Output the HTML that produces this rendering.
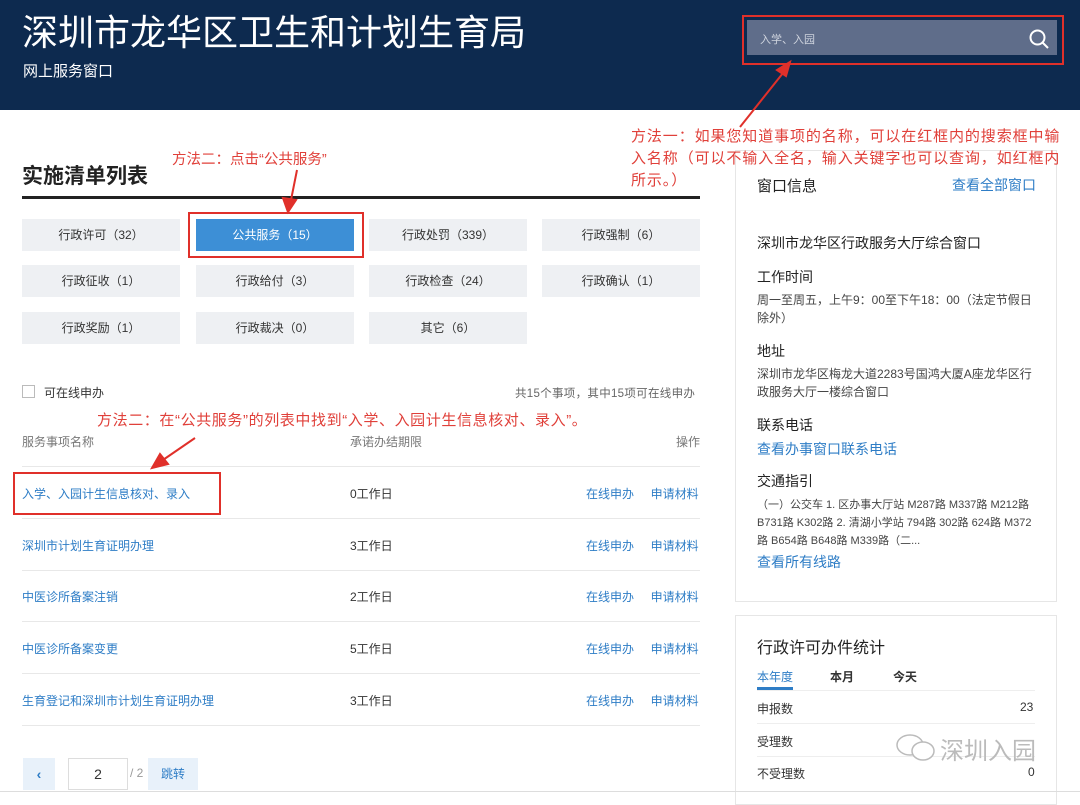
<!DOCTYPE html>
<html><head><meta charset="utf-8"><style>
*{margin:0;padding:0;box-sizing:border-box}
body{width:1080px;height:796px;position:relative;overflow:hidden;background:#fff;font-family:"Liberation Sans","Noto Sans CJK SC",sans-serif;color:#333}
.a{position:absolute;white-space:nowrap}
.hd{position:absolute;left:0;top:0;width:1080px;height:110px;background:#0d2a4f}
.btn{position:absolute;width:158px;height:32px;background:#eef0f3;font-size:12px;text-align:center;line-height:32px;color:#333}
.red{color:#e0403a}
.lnk{color:#2e7dc6}
.row{position:absolute;left:22px;width:678px;border-top:1px solid #e8e8e8}
.rb{position:absolute;border:2px solid #e0302a}
.card{position:absolute;border:1px solid #e6e6e6;background:#fff}
</style></head><body>
<div class="hd"></div>
<div class="a" style="left:22px;top:4px;font-size:36px;color:#fff">深圳市龙华区卫生和计划生育局</div>
<div class="a" style="left:23px;top:60px;font-size:15px;color:#fff">网上服务窗口</div>
<div class="a" style="left:747px;top:20px;width:310px;height:35px;background:#5f6d8a"></div>
<div class="a" style="left:760px;top:31px;font-size:11px;color:#cfd4de">入学、入园</div>
<svg class="a" style="left:1028px;top:28px" width="22" height="22" viewBox="0 0 22 22"><circle cx="9.5" cy="9.5" r="7" fill="none" stroke="#fff" stroke-width="2"/><line x1="14.5" y1="14.5" x2="20" y2="20" stroke="#fff" stroke-width="2"/></svg>
<div class="rb" style="left:742px;top:15px;width:322px;height:50px"></div>
<div class="card" style="left:735px;top:150px;width:322px;height:452px"></div>
<div class="card" style="left:735px;top:615px;width:322px;height:190px"></div>
<svg class="a" style="left:0;top:0;z-index:2" width="1080" height="796"><g stroke="#e0302a" stroke-width="2" fill="#e0302a"><line x1="787" y1="68" x2="740" y2="127"/><polygon points="790,62 777,70 786,76"/><line x1="297" y1="170" x2="290" y2="205"/><polygon points="288,212 283,198 296,200"/><line x1="195" y1="438" x2="160" y2="462"/><polygon points="152,468 160,454 168,464"/></g></svg>
<div class="a red" style="left:631px;top:126px;font-size:15px;line-height:22px;letter-spacing:0.9px;z-index:3">方法一：如果您知道事项的名称，可以在红框内的搜索框中输<br>入名称（可以不输入全名，输入关键字也可以查询，如红框内<br>所示。）</div>
<div class="a red" style="left:172px;top:148px;font-size:14.5px">方法二：点击“公共服务”</div>
<div class="a" style="left:22px;top:160px;font-size:21px;font-weight:bold;color:#222">实施清单列表</div>
<div class="a" style="left:22px;top:196px;width:678px;height:3px;background:#222"></div>
<div class="btn" style="left:22px;top:219px">行政许可（32）</div>
<div class="btn" style="left:196px;top:219px;background:#3d8fd6;color:#fff">公共服务（15）</div>
<div class="btn" style="left:369px;top:219px">行政处罚（339）</div>
<div class="btn" style="left:542px;top:219px">行政强制（6）</div>
<div class="btn" style="left:22px;top:265px">行政征收（1）</div>
<div class="btn" style="left:196px;top:265px">行政给付（3）</div>
<div class="btn" style="left:369px;top:265px">行政检查（24）</div>
<div class="btn" style="left:542px;top:265px">行政确认（1）</div>
<div class="btn" style="left:22px;top:312px">行政奖励（1）</div>
<div class="btn" style="left:196px;top:312px">行政裁决（0）</div>
<div class="btn" style="left:369px;top:312px">其它（6）</div>
<div class="rb" style="left:188px;top:212px;width:176px;height:46px"></div>
<div class="a" style="left:22px;top:385px;width:13px;height:13px;border:1px solid #bbb"></div>
<div class="a" style="left:44px;top:384px;font-size:12px;color:#333">可在线申办</div>
<div class="a" style="left:515px;top:385px;font-size:11.5px;color:#666;letter-spacing:0.3px">共15个事项，其中15项可在线申办</div>
<div class="a red" style="left:97px;top:409px;font-size:15px;letter-spacing:0.6px">方法二：在“公共服务”的列表中找到“入学、入园计生信息核对、录入”。</div>
<div class="a" style="left:22px;top:433px;font-size:12px;color:#777">服务事项名称</div>
<div class="a" style="left:350px;top:433px;font-size:12px;color:#777">承诺办结期限</div>
<div class="a" style="left:676px;top:433px;font-size:12px;color:#777">操作</div>
<div class="row" style="top:466px"></div>
<div class="row" style="top:518px"></div>
<div class="row" style="top:570px"></div>
<div class="row" style="top:621px"></div>
<div class="row" style="top:673px"></div>
<div class="row" style="top:725px"></div>
<div class="a lnk" style="left:22px;top:485px;font-size:12px">入学、入园计生信息核对、录入</div>
<div class="a lnk" style="left:22px;top:537px;font-size:12px">深圳市计划生育证明办理</div>
<div class="a lnk" style="left:22px;top:588px;font-size:12px">中医诊所备案注销</div>
<div class="a lnk" style="left:22px;top:640px;font-size:12px">中医诊所备案变更</div>
<div class="a lnk" style="left:22px;top:692px;font-size:12px">生育登记和深圳市计划生育证明办理</div>
<div class="a" style="left:350px;top:485px;font-size:12px">0工作日</div>
<div class="a" style="left:350px;top:537px;font-size:12px">3工作日</div>
<div class="a" style="left:350px;top:588px;font-size:12px">2工作日</div>
<div class="a" style="left:350px;top:640px;font-size:12px">5工作日</div>
<div class="a" style="left:350px;top:692px;font-size:12px">3工作日</div>
<div class="a lnk" style="left:586px;top:485px;font-size:12px">在线申办&nbsp;&nbsp;&nbsp;&nbsp;&nbsp;申请材料</div>
<div class="a lnk" style="left:586px;top:537px;font-size:12px">在线申办&nbsp;&nbsp;&nbsp;&nbsp;&nbsp;申请材料</div>
<div class="a lnk" style="left:586px;top:588px;font-size:12px">在线申办&nbsp;&nbsp;&nbsp;&nbsp;&nbsp;申请材料</div>
<div class="a lnk" style="left:586px;top:640px;font-size:12px">在线申办&nbsp;&nbsp;&nbsp;&nbsp;&nbsp;申请材料</div>
<div class="a lnk" style="left:586px;top:692px;font-size:12px">在线申办&nbsp;&nbsp;&nbsp;&nbsp;&nbsp;申请材料</div>
<div class="rb" style="left:13px;top:472px;width:208px;height:43px"></div>
<div class="a" style="left:23px;top:758px;width:32px;height:32px;background:#e8f1fa;color:#2e7dc6;text-align:center;line-height:32px;font-size:14px;font-weight:bold">‹</div>
<div class="a" style="left:68px;top:758px;width:60px;height:32px;border:1px solid #ddd;text-align:center;line-height:30px;font-size:14px">2</div>
<div class="a" style="left:130px;top:766px;font-size:12px;color:#999">/ 2</div>
<div class="a" style="left:148px;top:758px;width:50px;height:32px;background:#e8f1fa;color:#2e7dc6;text-align:center;line-height:32px;font-size:12px">跳转</div>
<div class="a" style="left:0;top:791px;width:1080px;height:1px;background:#ddd"></div>
<div class="a" style="left:757px;top:175px;font-size:15px;color:#222">窗口信息</div>
<div class="a lnk" style="left:952px;top:175px;font-size:14px">查看全部窗口</div>
<div class="a" style="left:757px;top:233px;font-size:14px;color:#222">深圳市龙华区行政服务大厅综合窗口</div>
<div class="a" style="left:757px;top:267px;font-size:14px;color:#222">工作时间</div>
<div class="a" style="left:757px;top:291px;font-size:12px;line-height:18px;white-space:normal;width:280px;color:#444">周一至周五，上午9：00至下午18：00（法定节假日除外）</div>
<div class="a" style="left:757px;top:341px;font-size:14px;color:#222">地址</div>
<div class="a" style="left:757px;top:365px;font-size:12px;line-height:18px;white-space:normal;width:282px;color:#444">深圳市龙华区梅龙大道2283号国鸿大厦A座龙华区行政服务大厅一楼综合窗口</div>
<div class="a" style="left:757px;top:415px;font-size:14px;color:#222">联系电话</div>
<div class="a lnk" style="left:757px;top:439px;font-size:14px">查看办事窗口联系电话</div>
<div class="a" style="left:757px;top:471px;font-size:14px;color:#222">交通指引</div>
<div class="a" style="left:757px;top:496px;font-size:11px;line-height:18px;white-space:normal;width:282px;color:#444">（一）公交车 1. 区办事大厅站 M287路 M337路 M212路 B731路 K302路 2. 清湖小学站 794路 302路 624路 M372路 B654路 B648路 M339路（二...</div>
<div class="a lnk" style="left:757px;top:552px;font-size:14px">查看所有线路</div>
<div class="a" style="left:757px;top:634px;font-size:16px;color:#222">行政许可办件统计</div>
<div class="a lnk" style="left:757px;top:668px;font-size:12px">本年度</div>
<div class="a" style="left:830px;top:668px;font-size:12px;font-weight:bold">本月</div>
<div class="a" style="left:893px;top:668px;font-size:12px;font-weight:bold">今天</div>
<div class="a" style="left:757px;top:687px;width:36px;height:3px;background:#2e7dc6"></div>
<div class="a" style="left:757px;top:690px;width:278px;height:1px;background:#eee"></div>
<div class="a" style="left:757px;top:700px;font-size:12px">申报数</div>
<div class="a" style="left:1020px;top:700px;font-size:12px">23</div>
<div class="a" style="left:757px;top:723px;width:278px;height:1px;background:#eee"></div>
<div class="a" style="left:757px;top:733px;font-size:12px">受理数</div>
<div class="a" style="left:757px;top:756px;width:278px;height:1px;background:#eee"></div>
<div class="a" style="left:757px;top:765px;font-size:12px">不受理数</div>
<div class="a" style="left:1028px;top:765px;font-size:12px">0</div>
<div class="a" style="left:940px;top:731px;font-size:24px;color:#bbb">深圳入园</div>
<svg class="a" style="left:895px;top:733px" width="44" height="30" viewBox="0 0 44 30"><ellipse cx="15" cy="12" rx="13" ry="10" fill="#fff" stroke="#bbb" stroke-width="1.5"/><ellipse cx="28" cy="18" rx="11" ry="9" fill="#fff" stroke="#bbb" stroke-width="1.5"/></svg>
</body></html>
